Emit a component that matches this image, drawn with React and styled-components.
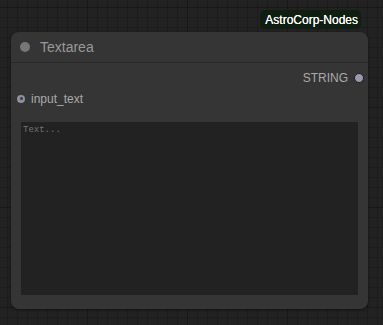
import React from "react";
import styled, { createGlobalStyle } from "styled-components";

const Global = createGlobalStyle`
  html, body { margin: 0; padding: 0; }
  body {
    width: 383px;
    height: 325px;
    overflow: hidden;
    background-color: #222222;
    background-image:
      linear-gradient(to right, #181818 1px, transparent 1px),
      linear-gradient(to bottom, #181818 1px, transparent 1px),
      linear-gradient(to right, #1c1c1c 1px, transparent 1px),
      linear-gradient(to bottom, #1c1c1c 1px, transparent 1px);
    background-size: 100px 100px, 100px 100px, 10px 10px, 10px 10px;
    background-position: 87px 7px, 87px 7px, 7px 7px, 7px 7px;
    font-family: "Liberation Sans", Arial, sans-serif;
  }
`;

const Canvas = styled.div`
  padding: 10px 0 0 11px;
  display: flex;
  flex-direction: column;
  width: 357px;
`;

const BadgeRow = styled.div`
  display: flex;
  justify-content: flex-end;
  padding-right: 7px;
  margin-bottom: 3px;
`;

const Badge = styled.div`
  height: 19px;
  padding: 0 3px 0 5px;
  display: flex;
  align-items: center;
  background: #0f1e10;
  color: #ffffff;
  font-size: 12px;
  border-radius: 5px;
  text-shadow: 0 0 0.4px #ffffff;
`;

const Node = styled.div`
  width: 357px;
  height: 277px;
  background: #353535;
  border-radius: 8px;
  box-shadow: 0 1px 3px rgba(0, 0, 0, 0.45);
  display: flex;
  flex-direction: column;
  box-sizing: border-box;
`;

const TitleBar = styled.div`
  height: 30px;
  display: flex;
  align-items: center;
  gap: 10px;
  padding-left: 9px;
  border-bottom: 1px solid #2a2a2a;
`;

const TitleDot = styled.span`
  width: 10px;
  height: 10px;
  border-radius: 50%;
  background: #777777;
`;

const Title = styled.span`
  color: #999999;
  font-size: 14px;
`;

const Body = styled.div`
  flex: 1;
  display: flex;
  flex-direction: column;
  padding: 4px 10px 14px 10px;
`;

const SlotRow = styled.div`
  height: 21px;
  display: flex;
  align-items: center;
  justify-content: ${(p) => (p.$out ? "flex-end" : "flex-start")};
  gap: 6px;
  color: #aaaaaa;
  font-size: 12px;
  margin: ${(p) => (p.$out ? "0 -6px 0 0" : "0 0 0 -4px")};
`;

const InDot = styled.span`
  width: 8px;
  height: 8px;
  border-radius: 50%;
  background: #8f8f9f;
  box-sizing: border-box;
  display: flex;
  align-items: center;
  justify-content: center;
  &::after {
    content: "";
    width: 3px;
    height: 3px;
    border-radius: 50%;
    background: #3a3a40;
  }
`;

const OutDot = styled.span`
  width: 10px;
  height: 10px;
  border-radius: 50%;
  background: #9a9aae;
  border: 1px solid #1e1e22;
  box-sizing: border-box;
`;

const TextArea = styled.textarea`
  margin-top: 13px;
  flex: 1;
  width: 100%;
  box-sizing: border-box;
  resize: none;
  border: none;
  outline: none;
  background: #222222;
  color: #cccccc;
  font-family: "Liberation Mono", "DejaVu Sans Mono", monospace;
  font-size: 9px;
  padding: 3px 2px;
  &::placeholder { color: #747474; }
`;

export default function App() {
  return (
    <>
      <Global />
      <Canvas>
        <BadgeRow>
          <Badge>AstroCorp-Nodes</Badge>
        </BadgeRow>
        <Node>
          <TitleBar>
            <TitleDot />
            <Title>Textarea</Title>
          </TitleBar>
          <Body>
            <SlotRow $out>
              STRING
              <OutDot />
            </SlotRow>
            <SlotRow>
              <InDot />
              input_text
            </SlotRow>
            <TextArea placeholder="Text..." />
          </Body>
        </Node>
      </Canvas>
    </>
  );
}
